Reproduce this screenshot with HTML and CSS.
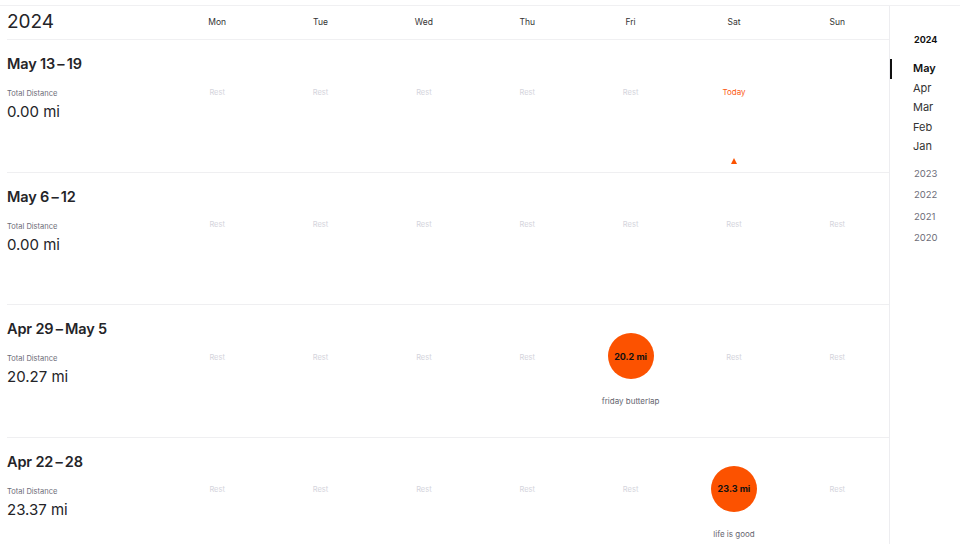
FILE: index.html
```html
<!DOCTYPE html>
<html lang="en">
<head>
<meta charset="utf-8">
<title>Training Log</title>
<link rel="stylesheet" href="styles.css">
</head>
<body>
<div class="page">
  <main class="main">
    <div class="head">
      <div class="year">2024</div>
      <div class="dow">Mon</div>
      <div class="dow">Tue</div>
      <div class="dow">Wed</div>
      <div class="dow">Thu</div>
      <div class="dow">Fri</div>
      <div class="dow">Sat</div>
      <div class="dow">Sun</div>
    </div>

    <section class="week">
      <div class="summary">
        <h2 class="range">May 13&thinsp;–&thinsp;19</h2>
        <div class="label">Total Distance</div>
        <div class="value">0.00 mi</div>
      </div>
      <div class="day"><div class="slot"><span class="rest">Rest</span></div></div>
      <div class="day"><div class="slot"><span class="rest">Rest</span></div></div>
      <div class="day"><div class="slot"><span class="rest">Rest</span></div></div>
      <div class="day"><div class="slot"><span class="rest">Rest</span></div></div>
      <div class="day"><div class="slot"><span class="rest">Rest</span></div></div>
      <div class="day today"><div class="slot"><span class="today-label">Today</span></div><span class="marker"></span></div>
      <div class="day"><div class="slot"></div></div>
    </section>

    <section class="week">
      <div class="summary">
        <h2 class="range">May 6&thinsp;–&thinsp;12</h2>
        <div class="label">Total Distance</div>
        <div class="value">0.00 mi</div>
      </div>
      <div class="day"><div class="slot"><span class="rest">Rest</span></div></div>
      <div class="day"><div class="slot"><span class="rest">Rest</span></div></div>
      <div class="day"><div class="slot"><span class="rest">Rest</span></div></div>
      <div class="day"><div class="slot"><span class="rest">Rest</span></div></div>
      <div class="day"><div class="slot"><span class="rest">Rest</span></div></div>
      <div class="day"><div class="slot"><span class="rest">Rest</span></div></div>
      <div class="day"><div class="slot"><span class="rest">Rest</span></div></div>
    </section>

    <section class="week">
      <div class="summary">
        <h2 class="range">Apr 29&thinsp;–&thinsp;May 5</h2>
        <div class="label">Total Distance</div>
        <div class="value">20.27 mi</div>
      </div>
      <div class="day"><div class="slot"><span class="rest">Rest</span></div></div>
      <div class="day"><div class="slot"><span class="rest">Rest</span></div></div>
      <div class="day"><div class="slot"><span class="rest">Rest</span></div></div>
      <div class="day"><div class="slot"><span class="rest">Rest</span></div></div>
      <div class="day"><div class="slot"><span class="bubble">20.2 mi</span></div><div class="act">friday butterlap</div></div>
      <div class="day"><div class="slot"><span class="rest">Rest</span></div></div>
      <div class="day"><div class="slot"><span class="rest">Rest</span></div></div>
    </section>

    <section class="week">
      <div class="summary">
        <h2 class="range">Apr 22&thinsp;–&thinsp;28</h2>
        <div class="label">Total Distance</div>
        <div class="value">23.37 mi</div>
      </div>
      <div class="day"><div class="slot"><span class="rest">Rest</span></div></div>
      <div class="day"><div class="slot"><span class="rest">Rest</span></div></div>
      <div class="day"><div class="slot"><span class="rest">Rest</span></div></div>
      <div class="day"><div class="slot"><span class="rest">Rest</span></div></div>
      <div class="day"><div class="slot"><span class="rest">Rest</span></div></div>
      <div class="day"><div class="slot"><span class="bubble">23.3 mi</span></div><div class="act">life is good</div></div>
      <div class="day"><div class="slot"><span class="rest">Rest</span></div></div>
    </section>
  </main>

  <nav class="side">
    <div class="side-year">2024</div>
    <ul class="months">
      <li class="month active">May</li>
      <li class="month">Apr</li>
      <li class="month">Mar</li>
      <li class="month">Feb</li>
      <li class="month">Jan</li>
    </ul>
    <ul class="years">
      <li>2023</li>
      <li>2022</li>
      <li>2021</li>
      <li>2020</li>
    </ul>
  </nav>
</div>
</body>
</html>
```

FILE: styles.css
```css
* { box-sizing: border-box; }
html, body { margin: 0; padding: 0; background: #fff; }
body {
  font-family: Inter, "Noto Sans", "Liberation Sans", sans-serif;
  color: #242428;
  height: 544px;
  overflow: hidden;
}
.page {
  display: flex;
  margin-top: 5px;
  border-top: 1px solid #f0f0f2;
}
.main {
  width: 890px;
  padding-left: 7px;
  border-right: 1px solid #ededf0;
}
.head, .week {
  display: grid;
  grid-template-columns: 158.5px repeat(7, 1fr);
}
.head {
  height: 34px;
  align-items: center;
  padding-bottom: 1px;
  border-bottom: 1px solid #f0f0f2;
}
.year {
  font-size: 19px;
  line-height: 24px;
  font-weight: 400;
}
.dow {
  text-align: center;
  font-size: 8.5px;
  color: #333;
}
.week {
  height: 132.67px;
  border-bottom: 1px solid #efeff1;
}
.summary {
  padding-top: 14px;
}
.range {
  margin: 0;
  font-size: 14.5px;
  line-height: 20px;
  font-weight: 600;
  letter-spacing: -0.15px;
}
.label {
  margin-top: 14px;
  font-size: 7.5px;
  line-height: 12px;
  color: #6d6d78;
}
.value {
  margin-top: 2px;
  font-size: 15px;
  line-height: 20px;
  color: #242428;
}
.day {
  display: flex;
  flex-direction: column;
  align-items: center;
  padding-top: 28px;
}
.slot {
  height: 46px;
  display: flex;
  align-items: center;
  justify-content: center;
}
.rest {
  margin-top: 2px;
  font-size: 7.5px;
  color: #d4d4dc;
}
.today-label {
  margin-top: 2px;
  font-size: 8px;
  color: #fc5a14;
}
.marker {
  margin-top: 44px;
  width: 0;
  height: 0;
  border-left: 3.5px solid transparent;
  border-right: 3.5px solid transparent;
  border-bottom: 6px solid #fc5200;
}
.bubble {
  width: 46px;
  height: 46px;
  border-radius: 50%;
  background: #fc5200;
  display: flex;
  align-items: center;
  justify-content: center;
  font-size: 9px;
  font-weight: 700;
  color: #111;
}
.act {
  margin-top: 16px;
  font-size: 8px;
  line-height: 12px;
  color: #666670;
}
.side {
  flex: 1;
  padding-top: 28px;
}
.side-year {
  padding-left: 24px;
  font-size: 9px;
  line-height: 12px;
  font-weight: 700;
  color: #111;
}
.months, .years {
  list-style: none;
  margin: 0;
  padding: 0;
}
.months {
  margin-top: 13px;
}
.month {
  padding-left: 23px;
  height: 19.5px;
  line-height: 19.5px;
  font-size: 11px;
  color: #333;
}
.month.active {
  font-weight: 600;
  color: #111;
  box-shadow: inset 2px 0 0 #111;
}
.years {
  margin-top: 6.5px;
}
.years li {
  padding-left: 24px;
  height: 21.3px;
  line-height: 21.3px;
  font-size: 9.5px;
  color: #6d6d78;
}
```
